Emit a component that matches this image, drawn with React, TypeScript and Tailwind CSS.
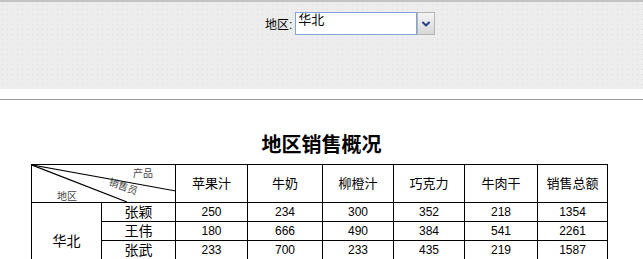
import { ChevronDown } from 'lucide-react'

const products = ['苹果汁', '牛奶', '柳橙汁', '巧克力', '牛肉干', '销售总额']
const colWidths = [70, 74, 72, 75, 71, 71, 73, 70]

const rows = [
  { name: '张颖', values: [250, 234, 300, 352, 218, 1354] },
  { name: '王伟', values: [180, 666, 490, 384, 541, 2261] },
  { name: '张武', values: [233, 700, 233, 435, 219, 1587] },
  { name: '赵六', values: [120, 310, 205, 198, 266, 1099] },
]

function RegionSelect() {
  return (
    <div className="flex items-start gap-[3px] text-[12px] text-black">
      <span className="mt-[6px] leading-[14px]">地区:</span>
      <div className="flex h-[23px]">
        <div className="w-[122px] overflow-hidden border border-[#7fa4d6] bg-white pl-[2px] text-[13px] leading-[13px]">
          华北
        </div>
        <div className="flex w-[18px] items-center justify-center border border-[#b4b4b4] bg-gradient-to-b from-[#f4f4f4] to-[#d8d8d8]">
          <ChevronDown size={12} strokeWidth={4} className="text-[#23408a]" />
        </div>
      </div>
    </div>
  )
}

function DiagonalHeader() {
  return (
    <div className="relative h-[37px] w-full">
      <svg className="absolute inset-0" width="144" height="37" viewBox="0 0 144 37">
        <line x1="0" y1="0" x2="144" y2="26" stroke="#000" strokeWidth="1.2" />
        <line x1="0" y1="0" x2="95" y2="37" stroke="#000" strokeWidth="1.2" />
      </svg>
      <span className="absolute left-[101px] top-[3px] text-[10px] leading-[12px] text-[#444]">产品</span>
      <span className="absolute left-[76px] top-[16px] rotate-[20deg] text-[10px] leading-[12px] text-[#444]">
        销售员
      </span>
      <span className="absolute left-[25px] top-[26px] text-[10px] leading-[12px] text-[#444]">地区</span>
    </div>
  )
}

export default function App() {
  return (
    <div className="h-[259px] w-[643px] overflow-hidden bg-white font-['Liberation_Sans','Noto_Sans_CJK_SC',sans-serif]">
      <div className="h-[89px] border-t-2 border-[#c0c4c4] bg-[#ededed] bg-[radial-gradient(#dcdcdc_0.6px,transparent_0.8px)] bg-[size:5px_5px] pt-[10px]">
        <div className="flex pl-[265px]">
          <RegionSelect />
        </div>
      </div>
      <div className="mt-[10px] border-t border-[#9a9a9a]" />

      <h1 className="mt-[33px] text-center text-[20px] font-bold leading-[24px] text-black">地区销售概况</h1>

      <table className="ml-[31px] mt-[7px] table-fixed border-collapse text-[12px] text-black">
        <colgroup>
          {colWidths.map((w, i) => (
            <col key={i} style={{ width: w }} />
          ))}
        </colgroup>
        <thead>
          <tr className="h-[38px]">
            <th colSpan={2} className="border border-black p-0 font-normal">
              <DiagonalHeader />
            </th>
            {products.map((p) => (
              <th key={p} className="border border-black p-0 text-[13px] font-normal leading-[16px]">
                {p}
              </th>
            ))}
          </tr>
        </thead>
        <tbody>
          {rows.map((r, i) => (
            <tr key={r.name} className="h-[19px]">
              {i === 0 && (
                <td rowSpan={rows.length} className="border border-black p-0 text-center text-[14px] leading-[16px]">
                  华北
                </td>
              )}
              <td className="border border-black p-0 text-center text-[14px] leading-[15px]">{r.name}</td>
              {r.values.map((v, j) => (
                <td key={j} className="border border-black p-0 text-center leading-[15px]">
                  {v}
                </td>
              ))}
            </tr>
          ))}
        </tbody>
      </table>
    </div>
  )
}
